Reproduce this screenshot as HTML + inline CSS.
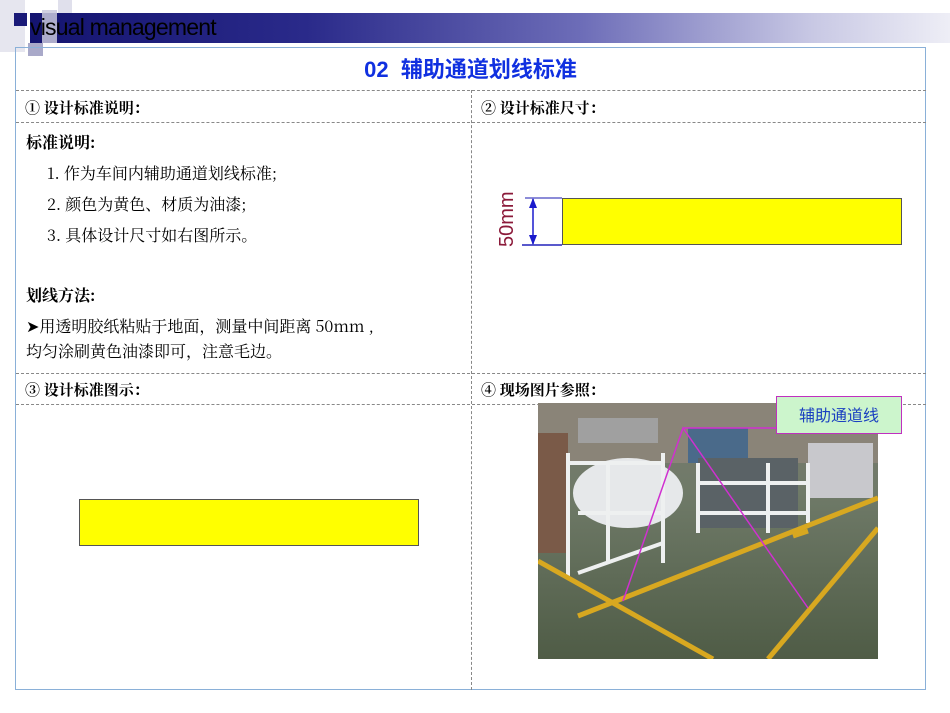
<!DOCTYPE html>
<html><head><meta charset="utf-8"><style>
body{margin:0;width:950px;height:713px;background:#fff;position:relative;overflow:hidden;font-family:"Noto Serif CJK SC","Liberation Serif",serif;}
.a{position:absolute}
.sq{position:absolute}
.t{font-size:16px;color:#000;position:absolute;white-space:nowrap;line-height:20px}
.dh{position:absolute;height:0;border-top:1px dashed #888}
.dv{position:absolute;width:0;border-left:1px dashed #888}
</style></head><body>
<div class="sq" style="left:0;top:0;width:25px;height:52px;background:#e6e6ef"></div>
<div class="sq" style="left:58px;top:0;width:14px;height:20px;background:#e0e0ec"></div>
<div class="a" style="left:30px;top:13px;width:920px;height:30px;background:linear-gradient(90deg,#141470 0%,#2a2a8a 30%,#6d6db8 60%,#c8c8e4 85%,#eeeef6 100%)"></div>
<div class="sq" style="left:14px;top:13px;width:13px;height:13px;background:#1a1a78"></div>
<div class="sq" style="left:42px;top:10px;width:15px;height:33px;background:#c8c8dc;opacity:.85"></div>
<div class="sq" style="left:28px;top:43px;width:15px;height:13px;background:#a9a9c9"></div>
<div class="a" style="left:30px;top:14px;font-family:'Liberation Sans',sans-serif;font-size:23px;color:#000;letter-spacing:-0.8px">visual management</div>
<div class="a" style="left:15px;top:47px;width:911px;height:643px;border:1px solid #8ab0d8;box-sizing:border-box"></div>
<div class="a" style="left:15px;top:56px;width:911px;text-align:center;font-family:'Liberation Sans','Noto Sans CJK SC',sans-serif;font-weight:bold;font-size:22px;color:#1030e0;line-height:28px">02&nbsp; 辅助通道划线标准</div>
<div class="dh" style="left:16px;top:90px;width:910px"></div>
<div class="dh" style="left:16px;top:122px;width:910px"></div>
<div class="dh" style="left:16px;top:373px;width:910px"></div>
<div class="dh" style="left:16px;top:404px;width:910px"></div>
<div class="dv" style="left:471px;top:90px;height:600px"></div>
<div class="t" style="left:25px;top:98px;font-weight:bold;font-size:15px">① 设计标准说明：</div>
<div class="t" style="left:481px;top:98px;font-weight:bold;font-size:15px">② 设计标准尺寸：</div>
<div class="t" style="left:25px;top:380px;font-weight:bold;font-size:15px">③ 设计标准图示：</div>
<div class="t" style="left:481px;top:380px;font-weight:bold;font-size:15px">④ 现场图片参照：</div>
<div class="t" style="left:26px;top:132px;font-weight:bold">标准说明:</div>
<div class="t" style="left:47px;top:163px">1. 作为车间内辅助通道划线标准;</div>
<div class="t" style="left:47px;top:194px">2. 颜色为黄色、材质为油漆;</div>
<div class="t" style="left:47px;top:225px">3. 具体设计尺寸如右图所示。</div>
<div class="t" style="left:26px;top:285px;font-weight:bold">划线方法:</div>
<div class="t" style="left:26px;top:316px">&#10148;用透明胶纸粘贴于地面，测量中间距离 50mm ,</div>
<div class="t" style="left:26px;top:341px">均匀涂刷黄色油漆即可，注意毛边。</div>
<div class="a" style="left:562px;top:198px;width:340px;height:47px;background:#ffff00;border:1px solid #555;box-sizing:border-box"></div>
<svg class="a" style="left:480px;top:185px" width="90" height="70">
<line x1="45" y1="13" x2="82" y2="13" stroke="#6666cc" stroke-width="1.5"/>
<line x1="42" y1="60" x2="82" y2="60" stroke="#2222bb" stroke-width="1.5"/>
<line x1="53" y1="14" x2="53" y2="59" stroke="#1a1acc" stroke-width="1.5"/>
<path d="M49 23 L53 13 L57 23Z M49 50 L53 60 L57 50Z" fill="#1a1acc"/>
<text x="0" y="0" transform="translate(33,62) rotate(-90)" font-family="Liberation Sans" font-size="20" fill="#8b1a3a">50mm</text>
</svg>
<div class="a" style="left:79px;top:499px;width:340px;height:47px;background:#ffff00;border:1px solid #555;box-sizing:border-box"></div>
<svg class="a" style="left:538px;top:403px" width="340" height="256">
<defs><linearGradient id="bg" x1="0" y1="0" x2="0" y2="1"><stop offset="0" stop-color="#7a7a70"/><stop offset=".35" stop-color="#6f7a68"/><stop offset="1" stop-color="#4f5c46"/></linearGradient></defs>
<rect width="340" height="256" fill="url(#bg)"/>
<rect x="0" y="0" width="340" height="60" fill="#8a8478"/>
<rect x="0" y="30" width="30" height="120" fill="#7a5a48"/>
<rect x="40" y="15" width="80" height="25" fill="#a0a0a0"/>
<rect x="150" y="25" width="60" height="35" fill="#4a6a8a"/>
<rect x="160" y="55" width="100" height="70" fill="#5a6266"/>
<rect x="270" y="40" width="65" height="55" fill="#c8c8cc"/>
<ellipse cx="90" cy="90" rx="55" ry="35" fill="#e6e8ea"/>
<g stroke="#eef0f0" stroke-width="4" fill="none">
<path d="M30 50 L30 175 M70 60 L70 160 M125 50 L125 160 M30 60 L125 60 M40 110 L125 110 M40 170 L125 140"/>
<path d="M160 60 L160 130 M230 60 L230 130 M270 60 L270 120 M160 80 L270 80 M160 110 L270 110"/>
</g>
<g stroke="#d8a820" stroke-width="5" fill="none">
<path d="M0 158 L175 256"/>
<path d="M40 213 L340 95"/>
<path d="M230 256 L340 125"/>
<path d="M255 133 L270 128"/>
</g>
<g stroke="#d030d0" stroke-width="1.5" fill="none">
<path d="M85 198 L145 25 L270 205"/>
<path d="M145 25 L240 25"/>
</g>
</svg>
<div class="a" style="left:776px;top:396px;width:126px;height:38px;background:#ccf5cc;border:1px solid #c030c0;box-sizing:border-box;text-align:center;line-height:40px;font-family:'Liberation Sans','Noto Sans CJK SC',sans-serif;font-size:16px;color:#1a40c0">辅助通道线</div>
</body></html>
